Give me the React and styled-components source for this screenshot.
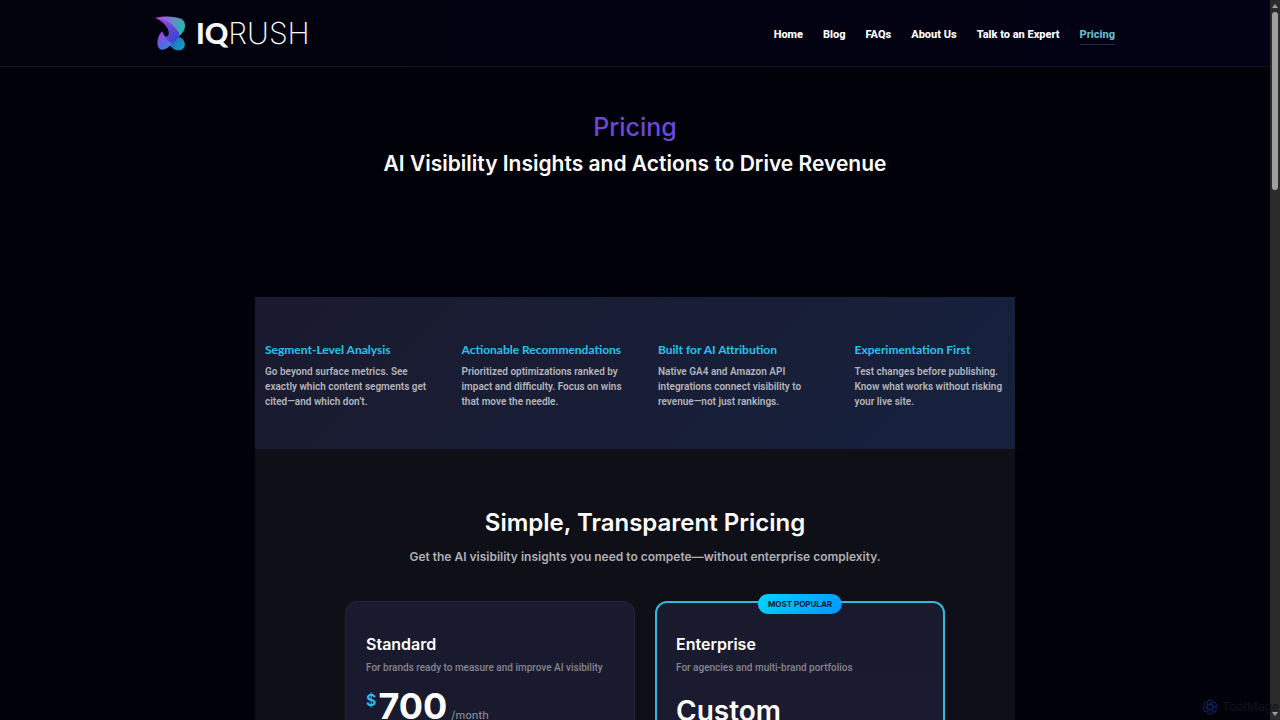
import React from 'react'
import styled, { createGlobalStyle } from 'styled-components'

const links = ['Home', 'Blog', 'FAQs', 'About Us', 'Talk to an Expert', 'Pricing']

const features = [
  {
    title: 'Segment-Level Analysis',
    text: 'Go beyond surface metrics. See\nexactly which content segments get\ncited—and which don’t.',
  },
  {
    title: 'Actionable Recommendations',
    text: 'Prioritized optimizations ranked by\nimpact and difficulty. Focus on wins\nthat move the needle.',
  },
  {
    title: 'Built for AI Attribution',
    text: 'Native GA4 and Amazon API\nintegrations connect visibility to\nrevenue—not just rankings.',
  },
  {
    title: 'Experimentation First',
    text: 'Test changes before publishing.\nKnow what works without risking\nyour live site.',
  },
]

const LogoMark = () => (
  <svg width="31" height="35" viewBox="17 16 92 104" aria-hidden="true">
    <defs>
      <linearGradient id="top" x1="0" y1="0" x2="1" y2="0.3">
        <stop offset="0" stopColor="#b83fe6" />
        <stop offset="0.5" stopColor="#7a7bd0" />
        <stop offset="1" stopColor="#27b5b0" />
      </linearGradient>
      <linearGradient id="wing" x1="0" y1="0" x2="0.8" y2="1">
        <stop offset="0" stopColor="#b83fe6" />
        <stop offset="0.5" stopColor="#6a45dc" />
        <stop offset="1" stopColor="#3341d0" />
      </linearGradient>
      <linearGradient id="petal" x1="0.1" y1="0" x2="0.6" y2="1">
        <stop offset="0" stopColor="#b03cdc" />
        <stop offset="0.5" stopColor="#6a5ce0" />
        <stop offset="1" stopColor="#2f86e0" />
      </linearGradient>
      <linearGradient id="tail" x1="0" y1="0.2" x2="1" y2="0.6">
        <stop offset="0" stopColor="#2f55d4" />
        <stop offset="1" stopColor="#0fa3b4" />
      </linearGradient>
    </defs>
    <path d="M18 21C45 15 78 16 96 25C108 32 109 50 101 62C97 68 91 74 86 78C72 62 52 28 18 21Z" fill="url(#top)" />
    <path d="M86 78C99 81 108 93 105 106C101 121 82 120 71 113C64 108 60 103 56 97C68 95 78 88 86 78Z" fill="url(#tail)" />
    <path d="M38 61C44 76 55 86 68 98C58 110 43 121 31 114C19 105 23 76 38 61Z" fill="url(#petal)" />
    <path d="M18 21C52 24 70 42 86 62C90 68 90 74 86 78C80 86 74 93 68 98C58 91 51 85 47 78C60 76 60 66 54 53C48 41 36 30 18 21Z" fill="url(#wing)" />
  </svg>
)

const Rosette = () => (
  <svg width="16" height="16" viewBox="0 0 24 24" fill="none" stroke="#0a2658" strokeWidth="1.6" aria-hidden="true">
    {[0, 60, 120, 180, 240, 300].map((angle) => (
      <path
        key={angle}
        d="M8 9.700V6a4.500 4.500 0 0 1 8.300-2.400M8 9.700l4-2.400 4.600 2.700"
        transform={`rotate(${angle} 12 12)`}
      />
    ))}
  </svg>
)

const App = () => {
  return (
    <>
      <Global />
      <Shell>
        <Page>
          <Header>
            <HeaderInner>
              <Logo href="#">
                <LogoMark />
                <LogoText>
                  <b>IQ</b>RUSH
                </LogoText>
              </Logo>
              <Nav>
                {links.map((name) => (
                  <NavLink key={name} href="#" $active={name === 'Pricing'}>
                    {name}
                  </NavLink>
                ))}
              </Nav>
            </HeaderInner>
          </Header>

          <Hero>
            <HeroTitle>Pricing</HeroTitle>
            <HeroText>AI Visibility Insights and Actions to Drive Revenue</HeroText>
          </Hero>

          <Content>
            <Features>
              <FeatureGrid>
                {features.map((item) => (
                  <div key={item.title}>
                    <FeatureTitle>{item.title}</FeatureTitle>
                    <FeatureText>{item.text}</FeatureText>
                  </div>
                ))}
              </FeatureGrid>
            </Features>

            <Plans>
              <PlansTitle>Simple, Transparent Pricing</PlansTitle>
              <PlansText>
                Get the AI visibility insights you need to compete—without enterprise complexity.
              </PlansText>
              <PlanGrid>
                <Card>
                  <CardTitle>Standard</CardTitle>
                  <CardText>For brands ready to measure and improve AI visibility</CardText>
                  <Price>
                    <Currency>$</Currency>
                    <Amount>700</Amount>
                    <Period>/month</Period>
                  </Price>
                </Card>
                <Card $popular>
                  <Badge>MOST POPULAR</Badge>
                  <CardTitle>Enterprise</CardTitle>
                  <CardText>For agencies and multi-brand portfolios</CardText>
                  <Custom>Custom</Custom>
                </Card>
              </PlanGrid>
            </Plans>
          </Content>
        </Page>

        <Track>
          <Arrow />
          <Thumb />
          <Arrow $down />
        </Track>

        <Watermark>
          <Rosette />
          ToolMage
        </Watermark>
      </Shell>
    </>
  )
}

export default App

const Global = createGlobalStyle`
  * {
    box-sizing: border-box;
  }
  body {
    margin: 0;
    background: #010109;
    color: #fff;
    font-family: Inter, "Liberation Sans", sans-serif;
  }
  h1, h2, h3, p {
    margin: 0;
  }
`

const Shell = styled.div`
  position: relative;
  display: flex;
  height: 100vh;
  overflow: hidden;
`

const Page = styled.div`
  flex: 1;
  min-width: 0;
`

const Header = styled.header`
  background: linear-gradient(90deg, #02020d, #020215);
  border-bottom: 1px solid #12121f;
`

const HeaderInner = styled.div`
  display: flex;
  align-items: center;
  justify-content: space-between;
  max-width: 960px;
  height: 66px;
  margin: 0 auto;
`

const Logo = styled.a`
  display: flex;
  align-items: center;
  gap: 10px;
  color: #fff;
  text-decoration: none;
`

const LogoText = styled.span`
  font-size: 30px;
  font-weight: 200;
  line-height: 36px;

  b {
    font-family: Lato, sans-serif;
    font-size: 29px;
    font-weight: 900;
  }
`

const Nav = styled.nav`
  display: flex;
  gap: 20px;
`

const NavLink = styled.a`
  padding-top: 4px;
  border-bottom: 1px solid ${(props) => (props.$active ? '#232c40' : 'transparent')};
  color: ${(props) => (props.$active ? '#67bccb' : '#fff')};
  font-family: Roboto, sans-serif;
  font-size: 11px;
  font-weight: 800;
  line-height: 18px;
  text-decoration: none;
`

const Hero = styled.section`
  height: 230px;
  padding-top: 42px;
  text-align: center;
`

const HeroTitle = styled.h1`
  color: #6d48d7;
  font-size: 25px;
  font-weight: 500;
  line-height: 36px;
`

const HeroText = styled.p`
  font-size: 21px;
  font-weight: 600;
  line-height: 38px;
`

const Content = styled.main`
  max-width: 760px;
  margin: 0 auto;
  overflow: hidden;
  background: #0f0f17;
`

const Features = styled.section`
  padding: 44px 0 40px;
  background: linear-gradient(135deg, #1a1a2e, #16213e);
`

const FeatureGrid = styled.div`
  display: grid;
  grid-template-columns: repeat(4, minmax(0, 1fr));
  gap: 26px;
  width: 100%;
  margin-left: 10px;
`

const FeatureTitle = styled.h3`
  margin-bottom: 5px;
  color: #22c4ee;
  font-family: Lato, "Noto Sans", sans-serif;
  font-size: 12px;
  font-weight: 700;
  line-height: 18px;
  white-space: nowrap;
`

const FeatureText = styled.p`
  color: #b3b4bb;
  font-family: Roboto, sans-serif;
  font-size: 10px;
  font-weight: 600;
  line-height: 15px;
  white-space: pre;
`

const Plans = styled.section`
  height: 400px;
  padding: 56px 0 0 20px;
  text-align: center;
`

const PlansTitle = styled.h2`
  font-size: 24px;
  font-weight: 600;
  line-height: 36px;
`

const PlansText = styled.p`
  margin: 6px 0 34px;
  color: #b0b0b5;
  font-size: 12px;
  font-weight: 600;
  line-height: 20px;
`

const PlanGrid = styled.div`
  display: grid;
  grid-template-columns: repeat(2, minmax(0, 1fr));
  gap: 20px;
  max-width: 600px;
  margin: 0 auto;
  text-align: left;
`

const Card = styled.article`
  position: relative;
  height: 400px;
  padding: ${(props) => (props.$popular ? '29px 19px' : '30px 20px')};
  border: ${(props) => (props.$popular ? '2px solid #2fb9da' : '1px solid #25253b')};
  border-radius: 12px;
  background: ${(props) =>
    props.$popular ? 'linear-gradient(180deg, #1a1a2e, #1d1e36)' : '#1a1a2e'};
`

const Badge = styled.span`
  position: absolute;
  top: -9px;
  left: 50%;
  padding: 0 10px;
  border-radius: 10px;
  background: linear-gradient(135deg, #00d4ff, #0095ff);
  color: #0d1a33;
  font-size: 8px;
  font-weight: 700;
  line-height: 20px;
  white-space: nowrap;
  transform: translateX(-50%);
`

const CardTitle = styled.h3`
  font-size: 16px;
  font-weight: 600;
  line-height: 24px;
`

const CardText = styled.p`
  margin-top: 4px;
  color: #85858e;
  font-family: Roboto, sans-serif;
  font-size: 10px;
  font-weight: 500;
  line-height: 15px;
  white-space: nowrap;
`

const Price = styled.div`
  display: flex;
  align-items: flex-start;
  margin-top: 12px;
`

const Currency = styled.span`
  margin-right: 2px;
  color: #22c4ee;
  font-size: 16px;
  font-weight: 600;
  line-height: 26px;
`

const Amount = styled.span`
  font-size: 36px;
  font-weight: 700;
  line-height: 38px;
`

const Period = styled.span`
  margin: 16px 0 0 4px;
  color: #85858e;
  font-size: 11px;
  font-weight: 500;
  line-height: 24px;
`

const Custom = styled.p`
  margin-top: 18px;
  font-size: 28px;
  font-weight: 600;
  line-height: 36px;
`

const Track = styled.div`
  display: flex;
  flex-direction: column;
  align-items: center;
  gap: 4px;
  width: 10px;
  padding: 4px 0;
  background: #2b2b2b;
`

const Arrow = styled.span`
  margin-top: ${(props) => (props.$down ? 'auto' : 0)};
  border: 3px solid transparent;
  border-top: ${(props) => (props.$down ? '4px solid #a0a0a0' : 0)};
  border-bottom: ${(props) => (props.$down ? 0 : '4px solid #a0a0a0')};
`

const Thumb = styled.span`
  width: 6px;
  height: 25%;
  border-radius: 3px;
  background: #9f9f9f;
`

const Watermark = styled.div`
  position: absolute;
  right: 1px;
  bottom: 4px;
  display: flex;
  align-items: center;
  gap: 4px;
  color: #10121d;
  font-size: 12px;
  font-weight: 500;
  line-height: 18px;
`
